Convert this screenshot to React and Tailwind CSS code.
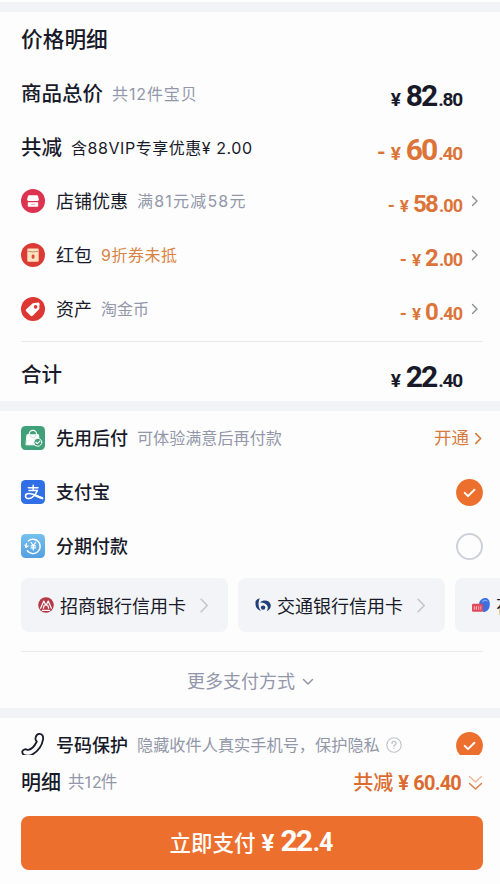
const Svg = ({ className, children, box = "0 0 24 24" }) => (
  <svg
    className={`shrink-0 ${className}`}
    viewBox={box}
    fill="none"
    stroke="currentColor"
    strokeLinecap="round"
    strokeLinejoin="round"
  >
    {children}
  </svg>
);

const ChevronRight = ({ className, width = 1.4 }) => (
  <Svg className={className} box="0 0 8 12">
    <path d="M1.5 1.5 6 6l-4.5 4.5" strokeWidth={width} />
  </Svg>
);

const StoreIcon = () => (
  <Svg className="size-6">
    <circle cx="12" cy="12" r="12" fill="#dc3350" stroke="none" />
    <path
      d="M8.200 6.200h7.600c.6 0 1 .3 1.200.8l.9 3.600c0 .8-.6 1.300-1.400 1.300h-9c-.8 0-1.400-.5-1.400-1.300L7 7c.2-.5.6-.8 1.200-.8z"
      fill="#fff"
      stroke="none"
    />
    <path d="M6.800 13.200h10.400v3.500c0 .6-.4 1-1 1H7.800c-.6 0-1-.4-1-1z" fill="#fff" stroke="none" />
    <path d="M10.500 15.300h3" stroke="#f0a0ae" strokeWidth="1" />
  </Svg>
);

const PacketIcon = () => (
  <Svg className="size-6">
    <circle cx="12" cy="12" r="12" fill="#dc3b35" stroke="none" />
    <rect x="6.300" y="5.500" width="11.400" height="13.200" rx="1.200" fill="#fbe3c0" stroke="none" />
    <path d="M7 8.300q5 1.400 10 0" stroke="#b9866a" strokeWidth=".9" />
    <rect x="10.700" y="11.500" width="2.800" height="4.200" rx="1.300" fill="#d9503f" stroke="none" />
  </Svg>
);

const TagIcon = () => (
  <Svg className="size-6">
    <circle cx="12" cy="12" r="12" fill="#dc3732" stroke="none" />
    <path
      d="M11.800 6.200l5.200-.6c.9 0 1.500.5 1.500 1.400l-.2 4.900-6.600 6.900c-.6.6-1.500.6-2.100 0l-4.400-4.500c-.6-.6-.5-1.400 0-2z"
      fill="#fff"
      stroke="none"
    />
    <circle cx="14.600" cy="9.900" r="1.800" fill="#dc3732" stroke="none" />
  </Svg>
);

const BagIcon = () => (
  <Svg className="size-6">
    <rect width="24" height="24" rx="4.500" fill="#40a07a" stroke="none" />
    <path d="M8.200 9.500V8a3.700 3.700 0 0 1 7.400 0v1.500" stroke="#fff" strokeWidth="1.200" />
    <path d="M6.300 8.800h11.300l.7 10H5.300z" fill="#fff" stroke="#fff" strokeWidth="1" />
    <path d="M9 9.500c.3 2.800 5.500 2.800 5.900 0" stroke="#b5dccb" strokeWidth=".8" />
    <circle cx="16.800" cy="16.300" r="4" fill="#40a07a" stroke="#fff" strokeWidth="1" />
    <path d="m14.900 16.300 1.500 1.400 2.500-2.600" stroke="#fff" strokeWidth="1.200" />
  </Svg>
);

const AlipayIcon = () => (
  <Svg className="size-6">
    <rect width="24" height="24" rx="4.500" fill="#306fe6" stroke="none" />
    <g stroke="#fff" strokeWidth="1.500">
      <path d="M7.300 7.800h9.700M12.200 5.300v5.300M8 10.600h8.300" />
      <path
        d="M16.300 10.600c-1.400 3.900-5 7.900-8.500 7.900-2.100 0-3.300-1-3.300-2.500s1.300-2.500 3.300-2.500c3.600 0 8.600 2.600 13.500 4.600"
        strokeWidth="1.600"
      />
      <path d="M14.500 15.600c2.400 1 4.600 2 6.800 2.700" strokeWidth="2.200" />
    </g>
  </Svg>
);

const InstallmentIcon = () => (
  <Svg className="size-6">
    <defs>
      <linearGradient id="sky" x1="0" y1="0" x2="0" y2="1">
        <stop offset="0" stopColor="#74c1ee" />
        <stop offset="1" stopColor="#549fe0" />
      </linearGradient>
    </defs>
    <rect width="24" height="24" rx="4.500" fill="url(#sky)" stroke="none" />
    <g stroke="#fff">
      <path d="M7.300 6.900A7.200 7.200 0 1 1 6.300 16.800M5 13.200a7.200 7.200 0 0 1 .5-3.500" strokeWidth="1.400" />
      <path d="M3.900 11.200l1.300 2 2-1.400" strokeWidth="1.200" />
      <path d="m10 8.500 2.300 3 2.300-3M12.300 11.500v4.500M10 11.800h4.600M10 13.800h4.600" strokeWidth="1.200" />
    </g>
  </Svg>
);

const CmbIcon = () => (
  <Svg className="size-4" box="0 0 16 16">
    <circle cx="8" cy="8" r="7.800" fill="#b53a47" stroke="none" />
    <path d="M2.600 11.200 5.800 4l2.200 4.600L10.200 4l3.200 7.200M5.300 11.200l1-3M10.700 11.200l-1-3M4.300 13.300h7.400" stroke="#fff" strokeWidth="1.200" />
  </Svg>
);

const BocomIcon = () => (
  <Svg className="size-4 text-[#213f78]" box="0 0 16 16">
    <path d="M.5 4.200C1.600 2.700 3 1.600 4.800 1.200 3.500 4 3.300 6.500 3.700 9c.3 2 1.200 3.700 2.600 5C2.700 13.200.6 10.600.5 7.600z" fill="currentColor" stroke="none" />
    <path d="M5 5.400c3.500-3.300 9.900-2.300 10.700 2.400.5 3-1.300 5.500-4 6.400 1-1.500 1.500-3.200.9-4.800C11.700 6.700 8.600 5.300 5 5.400z" fill="currentColor" stroke="none" />
    <circle cx="8.100" cy="10.600" r="2.200" fill="currentColor" stroke="none" />
  </Svg>
);

const HuabeiIcon = () => (
  <Svg className="h-4 w-[18px]" box="0 0 18 16">
    <path d="M7 6C8.500 1.500 12.200.3 15 1.200c2.700 1.300 3.400 5.500 2.400 9-.9 3-3.400 5-6.400 4.800z" fill="#3d6fe0" stroke="none" />
    <path d="M10.700 4.700c1.200-1.300 3-1.500 4.300-.7" stroke="#86a8f2" strokeWidth="1.200" />
    <rect x="0" y="6.800" width="11" height="8" rx="1.300" fill="#e0495a" stroke="none" />
    <path d="M2.300 9.300v3.200M4.500 9.300v3.200M6.700 9.300v3.200M8.800 9.300v3.200M2.300 11h2.200" stroke="#f7b6bd" strokeWidth=".8" />
  </Svg>
);

const PhoneIcon = () => (
  <Svg className="h-[26px] w-6 text-[#181a2a]" box="0 0 24 26">
    <path
      d="M2.200 22.400C.5 20.200 1.200 17.900 3.800 17.300c1.500-.3 2.300.7 3.600.5 3.300-.5 6.700-4.800 8.400-8.300-1.400-1.200-1.600-2.700-1.100-4.300.6-2.300 2.300-3.600 4.300-3.300 2.500.3 3.500 2.500 3 5.700-.9 5.500-5.200 11.500-10.300 14.700-2.500 1.500-7 2.200-9.500.1z"
      strokeWidth="1.800"
    />
  </Svg>
);

const Checked = () => (
  <Svg className="size-[27px]" box="0 0 27 27">
    <circle cx="13.500" cy="13.500" r="13.400" fill="#ed6f2d" stroke="none" />
    <path d="m8.700 13.900 3.300 3.200 6.400-6.300" stroke="#fff" strokeWidth="2" />
  </Svg>
);

const Yen = ({ className = "" }) => (
  <span className={`font-['Roboto'] ${className}`}>¥</span>
);

const Price = ({ whole, cents, minus, small }) => (
  <span className="flex items-baseline font-['Roboto',sans-serif] font-bold">
    {minus && <span className={small ? "mr-[5px] text-[18px]" : "mr-[5px] text-[22px]"}>-</span>}
    <Yen className={small ? "mr-[4px] text-[17px]" : "mr-[5px] text-[19px]"} />
    <span className={small ? "text-[24px] tracking-[-1.700px]" : "text-[30px] tracking-[-2px]"}>
      {whole}
    </span>
    <span className={small ? "ml-0.5 text-[18px] tracking-[-1px]" : "ml-0.5 text-[19px] tracking-[-1.200px]"}>
      .{cents}
    </span>
  </span>
);

const discounts = [
  { icon: <StoreIcon />, name: "店铺优惠", note: "满81元减58元", tone: "text-[#9297a9] tracking-[1.200px]", whole: "58", cents: "00" },
  { icon: <PacketIcon />, name: "红包", note: "9折券未抵", tone: "text-[#d98345] tracking-[0.500px]", whole: "2", cents: "00" },
  { icon: <TagIcon />, name: "资产", note: "淘金币", tone: "text-[#9297a9]", whole: "0", cents: "40" },
];

const BankCard = ({ icon, name }) => (
  <div className="flex h-[54px] w-[207px] shrink-0 items-center gap-[6px] rounded-lg bg-[#f3f4f7] pl-[17px] pr-[18px]">
    {icon}
    <span className="whitespace-nowrap pt-[3px] text-[18px] leading-none">{name}</span>
    <ChevronRight className="ml-auto h-[17px] w-[11px] text-[#c3c5cc]" width={1.1} />
  </div>
);

const Band = () => <div className="h-[10px] shrink-0 bg-[#f2f3f6]" />;

export default function App() {
  return (
    <div className="flex h-[884px] w-[500px] flex-col overflow-hidden bg-[#fdfdfd] pt-[2px] font-['Inter','Noto_Sans_CJK_SC',sans-serif] text-[#181a2a]">
      <Band />

      <section className="h-[389px] shrink-0 pl-[21px] pr-[17px]">
        <h1 className="flex h-[55px] items-center text-[21.700px] font-medium">价格明细</h1>
        <div className="flex h-[54px] items-center">
          <span className="text-[20.500px] font-medium">商品总价</span>
          <span className="ml-[9px] text-[16px] tracking-[0.900px] text-[#9297a9]">共12件宝贝</span>
          <div className="ml-auto pr-[21px] pt-[2px]"><Price whole="82" cents="80" /></div>
        </div>
        <div className="flex h-[53px] items-center">
          <span className="pt-px text-[20.500px] font-medium">共减</span>
          <span className="ml-[9px] text-[16px] tracking-[0.550px]">含88VIP专享优惠¥ 2.00</span>
          <div className="ml-auto pr-[21px] pt-[3px] text-[#dc743a]"><Price whole="60" cents="40" minus /></div>
        </div>
        {discounts.map((d) => (
          <div key={d.name} className="flex h-[54px] items-center">
            {d.icon}
            <span className="ml-[11px] text-[18px]">{d.name}</span>
            <span className={`ml-[9px] text-[16px] ${d.tone}`}>{d.note}</span>
            <div className="ml-auto pt-[5px] text-[#dc743a]">
              <Price whole={d.whole} cents={d.cents} minus small />
            </div>
            <ChevronRight className="ml-[9px] mr-[4px] h-[12px] w-[8px] text-[#8c8e96]" />
          </div>
        ))}
        <div className="mt-[5px] flex h-[61px] items-center border-t border-[#e8e9ec]">
          <span className="pt-[7px] text-[20.500px] font-medium">合计</span>
          <div className="ml-auto pr-[21px] pt-[8px]"><Price whole="22" cents="40" /></div>
        </div>
      </section>

      <Band />

      <section className="h-[297px] shrink-0 pl-[21px]">
        <div className="flex h-[54px] items-center pr-[17px]">
          <BagIcon />
          <span className="ml-[11px] text-[18px] font-medium">先用后付</span>
          <span className="ml-[9px] text-[16.100px] text-[#9297a9]">可体验满意后再付款</span>
          <span className="ml-auto text-[17.500px] text-[#d87a3c]">开通</span>
          <ChevronRight className="ml-[5px] h-[13px] w-[9px] text-[#d87a3c]" width={1.5} />
        </div>
        <div className="flex h-[54px] items-center pr-[17px]">
          <AlipayIcon />
          <span className="ml-[11px] mr-auto text-[18px] font-medium">支付宝</span>
          <Checked />
        </div>
        <div className="flex h-[54px] items-center pr-[17px]">
          <InstallmentIcon />
          <span className="ml-[11px] mr-auto text-[18px] font-medium">分期付款</span>
          <span className="size-[27px] rounded-full border-2 border-[#cfd1da]" />
        </div>
        <div className="mt-[5px] flex gap-[10px] overflow-hidden">
          <BankCard icon={<CmbIcon />} name="招商银行信用卡" />
          <BankCard icon={<BocomIcon />} name="交通银行信用卡" />
          <BankCard icon={<HuabeiIcon />} name="花呗" />
        </div>
        <div className="mr-[17px] mt-[19px] flex h-[60px] items-center justify-center border-t border-[#e8e9ec] pr-[3px] text-[#9297a9]">
          <span className="text-[18px]">更多支付方式</span>
          <Svg className="ml-[7px] h-[8px] w-[12px]" box="0 0 12 8">
            <path d="M1.500 1.500 6 6l4.500-4.500" strokeWidth="1.500" />
          </Svg>
        </div>
      </section>

      <Band />

      <section className="h-[37px] shrink-0 overflow-hidden pl-[21px] pr-[17px]">
        <div className="flex h-[54px] items-center">
          <PhoneIcon />
          <span className="ml-[11px] text-[18px] font-medium">号码保护</span>
          <span className="ml-[9px] text-[16.200px] text-[#9297a9]">隐藏收件人真实手机号，保护隐私</span>
          <Svg className="ml-[6px] size-4 text-[#bfc1c8]" box="0 0 16 16">
            <circle cx="8" cy="8" r="7.200" strokeWidth="1.100" />
            <path d="M6 6.400c0-2.600 4-2.600 4 0 0 1.300-2 1.500-2 3M8 11.500v.1" strokeWidth="1.300" />
          </Svg>
          <span className="ml-auto"><Checked /></span>
        </div>
      </section>

      <footer className="flex-1 pl-[21px] pr-[17px]">
        <div className="flex h-[56px] items-center">
          <span className="text-[20px] font-medium">明细</span>
          <span className="ml-[7px] font-['Roboto','Noto_Sans_CJK_SC',sans-serif] text-[16.500px] tracking-[-0.800px] text-[#9297a9]">共12件</span>
          <span className="ml-auto text-[20px] font-medium text-[#dc6b30]">共减</span>
          <span className="ml-[5px] font-['Roboto',sans-serif] text-[20px] font-bold tracking-[-0.800px] text-[#dc6b30]">
            <Yen className="mr-[5px]" />60.40
          </span>
          <Svg className="ml-[7px] h-[16px] w-[15px]" box="0 0 15 16">
            <path d="M1.500 1.500 7.500 7l6-5.500" stroke="#efb898" strokeWidth="1.400" />
            <path d="M1.500 8.500 7.500 14l6-5.500" stroke="#dc7a45" strokeWidth="1.400" />
          </Svg>
        </div>
        <button className="mt-[5px] flex h-[54px] w-full items-center justify-center rounded-lg bg-[#ed6f2d] text-white">
          <span className="flex items-baseline pb-[5px] pr-[2px]">
            <span className="text-[21.500px] font-medium">立即支付</span>
            <span className="flex items-baseline font-['Roboto',sans-serif] font-bold">
              <Yen className="ml-[6px] mr-[6px] text-[24px]" />
              <span className="text-[30px] tracking-[-2px]">22</span>
              <span className="ml-0.5 text-[25px] tracking-[-1px]">.4</span>
            </span>
          </span>
        </button>
      </footer>
    </div>
  );
}
